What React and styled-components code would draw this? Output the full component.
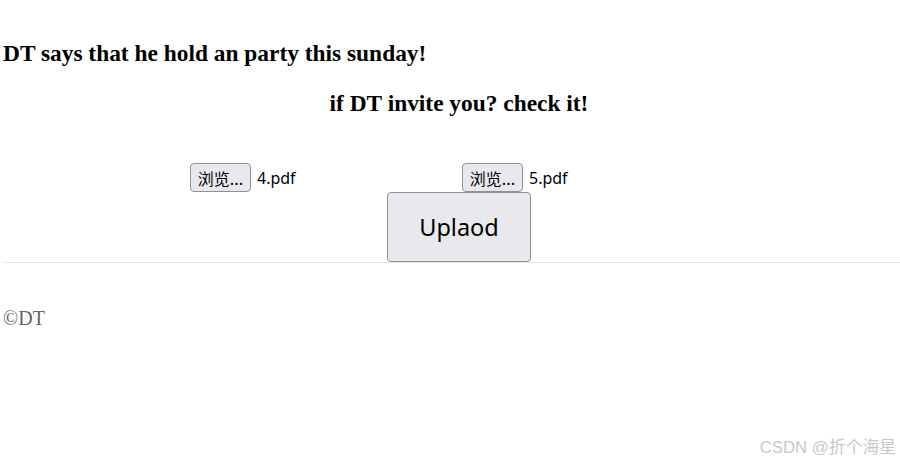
import React from "react";
import styled, { createGlobalStyle } from "styled-components";

const Global = createGlobalStyle`
  html, body { margin: 0; padding: 0; background: #fff; overflow: hidden; }
  body { width: 900px; height: 463px; position: relative; font-family: "Liberation Serif", serif; }
`;

const Page = styled.div`
  width: 912px;
  padding-left: 3px;
  display: flex;
  flex-direction: column;
`;

const Title = styled.h3`
  margin: 40px 0 0;
  font-family: "Liberation Serif", serif;
  font-weight: bold;
  font-size: 23.4px;
  line-height: 27px;
  color: #000;
`;

const Sub = styled.h3`
  margin: 23px 0 0;
  text-align: center;
  font-family: "Liberation Serif", serif;
  font-weight: bold;
  font-size: 23.4px;
  line-height: 27px;
  color: #000;
`;

const FileRow = styled.div`
  margin-top: 46px;
  display: flex;
  padding-left: 187px;
  height: 29px;
  align-items: center;
`;

const FileField = styled.div`
  display: flex;
  align-items: center;
  width: 272px;
  gap: 6px;
`;

const Browse = styled.button`
  box-sizing: border-box;
  width: 61px;
  height: 29px;
  padding: 0;
  border: 1px solid #8f8f9d;
  border-radius: 4px;
  background: #e9e9ed;
  font-family: "Noto Sans CJK SC", "Noto Sans", sans-serif;
  font-size: 16px;
  color: #000;
`;

const FileName = styled.span`
  font-family: "Noto Sans", "Open Sans", sans-serif;
  font-size: 16px;
  color: #000;
`;

const UploadWrap = styled.div`
  display: flex;
  justify-content: center;
`;

const Upload = styled.button`
  box-sizing: border-box;
  width: 144px;
  height: 70px;
  border: 1px solid #8f8f9d;
  border-radius: 4px;
  background: #e9e9ed;
  font-family: "Noto Sans", "Open Sans", sans-serif;
  font-size: 23.5px;
  color: #000;
  padding: 0;
`;

const Rule = styled.hr`
  margin: 0;
  border: none;
  border-top: 1px solid #e3e3e3;
  width: 897px;
`;

const Footer = styled.p`
  margin: 44px 0 0;
  font-family: "Liberation Serif", serif;
  font-size: 20px;
  color: #666;
`;

const Watermark = styled.div`
  position: absolute;
  right: 4px;
  bottom: 5px;
  font-family: "Liberation Sans", "Noto Sans CJK SC", sans-serif;
  font-size: 16.8px;
  color: #c8c8c8;
`;

export default function App() {
  return (
    <>
      <Global />
      <Page>
        <Title>DT says that he hold an party this sunday!</Title>
        <Sub>if DT invite you? check it!</Sub>
        <FileRow>
          <FileField>
            <Browse>浏览...</Browse>
            <FileName>4.pdf</FileName>
          </FileField>
          <FileField>
            <Browse>浏览...</Browse>
            <FileName>5.pdf</FileName>
          </FileField>
        </FileRow>
        <UploadWrap>
          <Upload>Uplaod</Upload>
        </UploadWrap>
        <Rule />
        <Footer>©DT</Footer>
      </Page>
      <Watermark>CSDN @折个海星</Watermark>
    </>
  );
}
